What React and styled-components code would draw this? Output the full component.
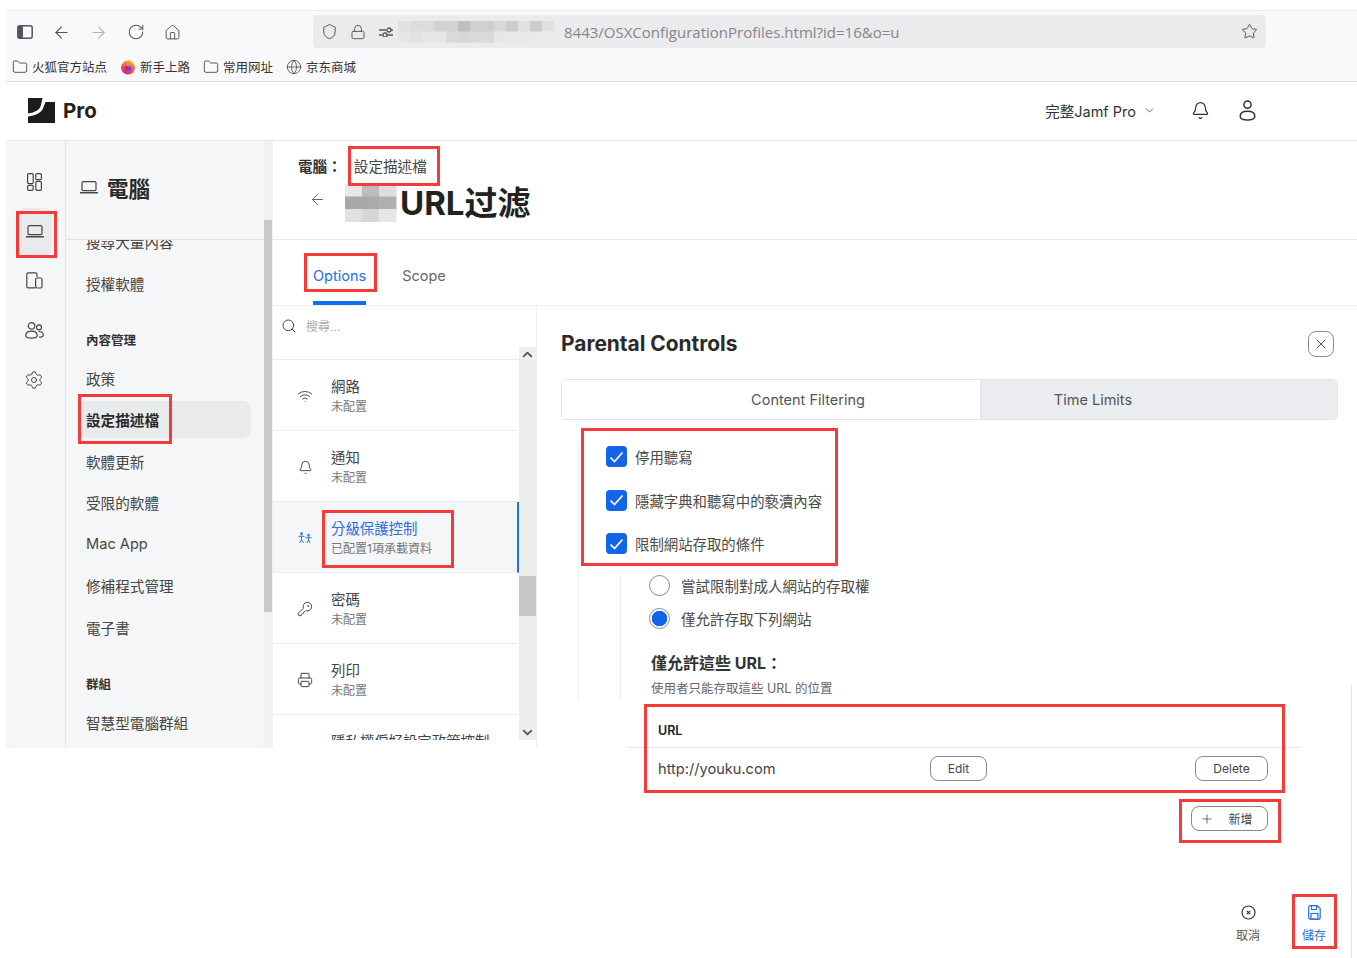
import React from "react"
import styled, { createGlobalStyle } from "styled-components"
import {
  ArrowLeft, ArrowRight, RotateCw, House, Shield, Lock, Star, Folder, Globe, ChevronDown,
  Bell, Settings, Search, Wifi, KeyRound, Printer, X, Plus, ChevronUp,
} from "lucide-react"

const GlobalStyle = createGlobalStyle`
  * { box-sizing: border-box; }
  body {
    margin: 0;
    background: #fff;
    font-family: Inter, "Noto Sans CJK TC", sans-serif;
    color: #444;
  }
`

const Page = styled.div`
  position: relative;
  width: 1357px;
  height: 958px;
  overflow: hidden;
  padding: 10px 0 0 6px;
  background: #fff;
`

/* firefox chrome */
const Chrome = styled.div`
  background: #f9f9fb;
  border-top: 1px solid #ececee;
  border-bottom: 1px solid #dcdcde;
  height: 72px;
`
const Toolbar = styled.div`
  display: flex;
  align-items: center;
  height: 42px;
  padding-left: 0;
  color: #55555a;
`
const ToolIcons = styled.div`
  display: flex;
  align-items: center;
  width: 307px;
`
const ToolSlot = styled.span`
  display: flex;
  align-items: center;
  justify-content: center;
  width: 37px;
`
const UrlBar = styled.div`
  display: flex;
  align-items: center;
  width: 953px;
  height: 33px;
  margin-top: -1px;
  padding: 0 8px;
  border-radius: 4px;
  background: #ebebed;
  gap: 4px;
`
const UrlIcons = styled.div`
  display: flex;
  align-items: center;
  gap: 12px;
`
const UrlText = styled.span`
  flex: 1;
  margin-left: 6px;
  font-family: "Open Sans", "Noto Sans", sans-serif;
  font-size: 15px;
  color: #85858a;
`
const Bookmarks = styled.div`
  display: flex;
  align-items: center;
  height: 27px;
  padding-left: 6px;
  gap: 13px;
`
const Bookmark = styled.span`
  display: flex;
  align-items: center;
  gap: 4px;
  font-family: "Noto Sans CJK SC", sans-serif;
  font-size: 12.5px;
  color: #333;
`

/* jamf header */
const AppHeader = styled.header`
  display: flex;
  align-items: center;
  height: 59px;
  padding: 0 101px 1px 22px;
  border-bottom: 1px solid #e6e7e9;
`
const Brand = styled.div`
  display: flex;
  align-items: center;
  gap: 8px;
  font-size: 20.5px;
  font-weight: 700;
  color: #222;
  flex: 1;
`
const Env = styled.div`
  display: flex;
  align-items: center;
  font-size: 14.5px;
  color: #333;
  gap: 7px;
  margin-right: 35px;
`
const HeaderIcons = styled.div`
  display: flex;
  align-items: center;
  gap: 29px;
  color: #333;
`

const Body = styled.div`
  display: flex;
  align-items: flex-start;
`

/* left side */
const Sidebar = styled.aside`
  display: flex;
  flex: none;
  height: 607px;
  width: 267px;
  background: #f5f6f8;
`
const Rail = styled.nav`
  flex: none;
  width: 60px;
  padding-top: 16px;
  border-right: 1px solid #e2e3e5;
`
const RailItem = styled.div`
  display: flex;
  align-items: center;
  justify-content: center;
  height: ${p => (p.$active ? "48px" : "49.5px")};
  margin: ${p => (p.$active ? "1px 13px 0.5px 11px" : "0 3px 0 0")};
  border-radius: 8px;
  background: ${p => (p.$active ? "#e9eaec" : "transparent")};
  color: #444;
`
const NavCol = styled.div`
  flex: none;
  width: 198px;
  display: flex;
  flex-direction: column;
`
const NavHead = styled.div`
  flex: none;
  display: flex;
  align-items: center;
  gap: 9px;
  height: 99px;
  padding: 0 0 6px 14px;
  border-bottom: 1px solid #dfe0e2;
  font-size: 21.5px;
  font-weight: 700;
  color: #2a2a2a;
  position: relative;
  z-index: 1;
  background: #f5f6f8;
`
const NavList = styled.div`
  flex: 1;
  overflow: hidden;
`
const NavInner = styled.div`
  display: flex;
  flex-direction: column;
  margin-top: -19px;
`
const NavLabel = styled.div`
  display: flex;
  align-items: center;
  height: 53.5px;
  padding: 17px 0 0 20px;
  font-size: 12.5px;
  font-weight: 700;
  color: #333;
`
const NavItem = styled.div`
  display: flex;
  align-items: center;
  flex: none;
  width: 173px;
  height: 37px;
  margin: 2.25px 0 2.25px 12px;
  padding-left: 8px;
  border-radius: 8px;
  font-size: 14.6px;
  font-weight: ${p => (p.$active ? 700 : 400)};
  color: ${p => (p.$active ? "#2a2a2a" : "#454545")};
  background: ${p => (p.$active ? "#e9eaec" : "transparent")};
`
const NavScroll = styled.div`
  flex: none;
  width: 9px;
  height: 607px;
  background: #f1f1f1;
  padding: 79px 1px 136px 0;
  &::after {
    content: "";
    display: block;
    height: 100%;
    background: #c9c9c9;
  }
`

/* main */
const Main = styled.main`
  flex: 1;
  min-width: 0;
`
const PageHead = styled.div`
  height: 99px;
  padding: 13px 0 0 25px;
  border-bottom: 1px solid #e6e7e9;
`
const Crumb = styled.div`
  display: flex;
  align-items: center;
  height: 23px;
  white-space: nowrap;
  font-size: 14.6px;
  color: #444;
  b {
    color: #333;
    margin-right: 12px;
    font-weight: 700;
  }
`
const TitleRow = styled.div`
  display: flex;
  align-items: center;
  height: 44px;
  margin-top: 4px;
  padding-left: 11px;
  color: #555;
`
const BackArrow = styled.span`
  display: flex;
  margin-bottom: 8px;
`
const Spacer = styled.span`
  flex: none;
  width: 19px;
`
const Title = styled.h1`
  margin: 0 0 0 4px;
  font-size: 33px;
  line-height: 44px;
  font-weight: 700;
  color: #222;
`
const Tabs = styled.div`
  display: flex;
  height: 66px;
  padding-left: 40px;
  gap: 36px;
  border-bottom: 1px solid #ececee;
`
const Tab = styled.div`
  display: flex;
  align-items: center;
  height: 65px;
  padding-top: 9px;
  font-size: 14.5px;
  color: ${p => (p.$active ? "#1a6fe8" : "#666")};
  border-bottom: 4px solid ${p => (p.$active ? "#0f6fec" : "transparent")};
`
const Split = styled.div`
  display: flex;
  align-items: flex-start;
`
const ListCol = styled.div`
  flex: none;
  width: 264px;
  height: 442px;
  border-right: 1px solid #f0f0f0;
`
const SearchRow = styled.div`
  display: flex;
  align-items: center;
  gap: 9px;
  height: 41px;
  padding: 0 0 2px 8px;
  color: #444;
  font-size: 12px;
  span { color: #aaa; }
`
const ListBody = styled.div`
  display: flex;
  height: 393px;
`
const Rows = styled.div`
  flex: none;
  width: 246px;
  overflow: hidden;
`
const RowStub = styled.div`
  height: 13px;
  border-bottom: 1px solid #ececee;
`
const Row = styled.div`
  display: flex;
  align-items: center;
  height: 71px;
  padding: 2px 0 0 24px;
  border-bottom: 1px solid #ececee;
  border-right: 2px solid ${p => (p.$active ? "#1f6fe0" : "transparent")};
  background: ${p => (p.$active ? "#f5f6f8" : "#fff")};
  color: ${p => (p.$active ? "#2a6fe0" : "#444")};
`
const RowIcon = styled.div`
  display: flex;
  justify-content: center;
  flex: none;
  width: 16px;
  margin-right: 18px;
`
const RowTitle = styled.div`
  font-size: 14.4px;
  line-height: 21px;
  color: ${p => (p.$active ? "#2a6fe0" : "#444")};
`
const RowSub = styled.div`
  font-size: 12px;
  line-height: 19px;
  color: #777;
`
const ScrollBar = styled.div`
  flex: none;
  width: 17px;
  height: 393px;
  display: flex;
  flex-direction: column;
  justify-content: space-between;
  align-items: center;
  position: relative;
  background: #eeeeee;
  color: #555;
`
const ScrollThumb = styled.div`
  position: absolute;
  top: 229px;
  left: 0;
  width: 17px;
  height: 40px;
  background: #c8c8c8;
`

/* parental controls panel */
const Panel = styled.section`
  position: relative;
  flex: 1;
  height: 652px;
  padding: 20px 19px 0 24px;
`
const PanelEdge = styled.div`
  position: absolute;
  top: 379px;
  right: 5px;
  bottom: 0;
  width: 1px;
  background: #e2e2e2;
`
const PanelHead = styled.div`
  display: flex;
  align-items: center;
  justify-content: space-between;
  height: 36px;
  margin-bottom: 17px;
  padding-right: 4px;
  h2 {
    margin: 0 0 2px;
    font-size: 20.9px;
    font-weight: 700;
    color: #2a2a2a;
  }
`
const CloseButton = styled.button`
  display: flex;
  align-items: center;
  justify-content: center;
  width: 26px;
  height: 26px;
  padding: 0;
  border: 1px solid #8a8a8a;
  border-radius: 8px;
  background: #fff;
  color: #444;
`
const Segments = styled.div`
  display: grid;
  grid-template-columns: 418px 1fr;
  height: 41px;
  border: 1px solid #e3e4e6;
  border-radius: 5px;
  overflow: hidden;
`
const Segment = styled.div`
  display: flex;
  align-items: center;
  justify-content: center;
  padding: ${p => (p.$on ? "0 132px 0 0" : "0 0 0 74px")};
  font-size: 14.5px;
  color: #555;
  background: ${p => (p.$on ? "#ebecef" : "#fff")};
  border-left: ${p => (p.$on ? "1px solid #e3e4e6" : "none")};
`
const Filter = styled.div`
  height: 258px;
  margin: 22px 0 0 17px;
  padding-left: 27px;
  border-left: 1px solid #eeeeee;
`
const Checks = styled.div`
  display: flex;
  flex-direction: column;
  gap: 14.5px;
`
const CheckRow = styled.label`
  display: flex;
  align-items: center;
  height: 29px;
  gap: 8px;
  font-size: 14.4px;
  color: #4a4a4a;
`
const CheckBox = styled.span`
  display: flex;
  align-items: center;
  justify-content: center;
  width: 21px;
  height: 21px;
  border-radius: 4px;
  background: #1264e8;
  color: #fff;
`
const Nested = styled.div`
  height: 124px;
  margin: 17px 0 0 14px;
  padding-left: 28px;
  border-left: 1px solid #eeeeee;
`
const Radios = styled.div`
  display: flex;
  flex-direction: column;
  gap: 12px;
`
const RadioRow = styled.label`
  display: flex;
  align-items: center;
  height: 21px;
  gap: 11px;
  font-size: 14.5px;
  color: #4a4a4a;
`
const Radio = styled.span`
  flex: none;
  width: 21px;
  height: 21px;
  border-radius: 50%;
  border: 1px solid #888;
  background: ${p => (p.$on ? "radial-gradient(circle, #1264e8 0 7.5px, #fff 8px)" : "#fff")};
`
const UrlHeading = styled.div`
  display: flex;
  align-items: center;
  height: 20px;
  margin: 23px 0 0 2px;
  font-size: 16px;
  font-weight: 700;
  color: #333;
`
const UrlHint = styled.div`
  height: 16px;
  margin: 9px 0 0 2px;
  font-size: 12.5px;
  line-height: 16px;
  color: #666;
`
const Table = styled.div`
  width: 674px;
  margin-left: 66px;
`
const TableHead = styled.div`
  display: flex;
  align-items: center;
  height: 48px;
  padding: 13px 0 0 31px;
  border-bottom: 1px solid #e8e8e8;
  font-size: 12.5px;
  font-weight: 600;
  color: #222;
`
const TableRow = styled.div`
  display: grid;
  grid-template-columns: 272px 57px 1fr 73px;
  align-items: center;
  height: 41px;
  padding: 0 33px 0 31px;
  font-size: 14.6px;
  color: #444;
`
const PillButton = styled.button`
  display: flex;
  align-items: center;
  justify-content: center;
  grid-column: ${p => p.$col || "auto"};
  width: ${p => p.$w || "auto"};
  height: 25px;
  padding: 0 ${p => p.$pr || "0"} 0 0;
  border: 1px solid #888;
  border-radius: 8px;
  background: #fff;
  font-family: inherit;
  font-size: 12px;
  color: #444;
  gap: ${p => p.$gap || "15px"};
`
const AddRow = styled.div`
  display: flex;
  justify-content: flex-end;
  margin-top: 17px;
  padding-right: 33px;
`
const Footer = styled.div`
  display: flex;
  justify-content: flex-end;
  margin: 74px -9px 0 0;
`
const FootAction = styled.div`
  display: flex;
  flex-direction: column;
  align-items: center;
  width: 66px;
  gap: 6px;
  font-size: 12px;
  color: ${p => (p.$blue ? "#2a6fe0" : "#555")};
  svg { color: ${p => (p.$blue ? "#2a6fe0" : "#333")}; }
`

/* red annotation boxes laid over the screenshot */
const Mark = styled.div`
  position: absolute;
  left: ${p => p.$x}px;
  top: ${p => p.$y}px;
  width: ${p => p.$w}px;
  height: ${p => p.$h}px;
  border: 3px solid #f53a3a;
  pointer-events: none;
`

const Mosaic = ({ cols, rows, cellW, cellH, colors, id }) => (
  <svg width={cols * cellW} height={rows * cellH} style={{ flex: "none", overflow: "visible" }}>
    <defs>
      <filter id={id} x="-10%" y="-10%" width="120%" height="120%">
        <feGaussianBlur stdDeviation="0.7" />
      </filter>
    </defs>
    <g filter={`url(#${id})`}>
      {colors.map((c, i) => (
        <rect key={i} x={(i % cols) * cellW} y={Math.floor(i / cols) * cellH} width={cellW + 0.5} height={cellH + 0.5} fill={c} />
      ))}
    </g>
  </svg>
)

const SidebarToggle = () => (
  <svg width="16" height="14" viewBox="0 0 16 14" fill="none">
    <rect x="0.8" y="0.8" width="14.4" height="12.4" rx="2" stroke="#55555a" strokeWidth="1.5" />
    <rect x="1" y="1" width="5" height="12" fill="#55555a" />
  </svg>
)

const TrackingPrefs = () => (
  <svg width="16" height="10" viewBox="0 0 16 10" fill="none" stroke="#55555a" strokeWidth="1.3">
    <path d="M1 3h7M1 8h3" />
    <circle cx="11" cy="3" r="2" />
    <circle cx="7" cy="8" r="2" />
    <path d="M13 3h2M9 8h6" />
  </svg>
)

const FirefoxMark = () => (
  <svg width="16" height="16" viewBox="0 0 16 16">
    <defs>
      <linearGradient id="fx" x1="0.7" y1="0" x2="0.3" y2="1">
        <stop offset="0" stopColor="#ffb129" />
        <stop offset="0.55" stopColor="#ff4f3a" />
        <stop offset="1" stopColor="#e31587" />
      </linearGradient>
    </defs>
    <circle cx="8" cy="8.6" r="7" fill="url(#fx)" />
    <path d="M9.5 0.6c1 1.8 3 2.4 4 4.4L9 5z" fill="#ffb129" />
    <circle cx="8" cy="9" r="3.3" fill="#7b3fd6" />
    <path d="M5 6.2c2-1.4 5-0.6 5.8 1.6C9.4 7 7 7 5 6.2z" fill="#ff9a1f" />
  </svg>
)

const JamfLogo = () => (
  <svg width="27" height="25" viewBox="0 0 27 25" fill="#1c1c1c">
    <path d="M0 0h14.500l-1.800 8C11.800 11.500 7 14.500 0 15.500z" />
    <path d="M17.500 4H27v21H0v-6.500c7.500-1 13-3.500 15-8z" />
  </svg>
)

const UserIcon = () => (
  <svg width="17" height="21" viewBox="0 0 17 21" fill="none" stroke="#333" strokeWidth="1.5">
    <circle cx="8.5" cy="4.6" r="3.6" />
    <path d="M1.2 16.500c0-3.400 3-5.200 7.300-5.200s7.300 1.800 7.300 5.200c0 2.400-2.200 3.400-7.300 3.400s-7.300-1-7.300-3.400z" />
  </svg>
)

const DashboardIcon = () => (
  <svg width="15" height="18" viewBox="0 0 15 18" fill="none" stroke="#444" strokeWidth="1.200">
    <rect x="0.600" y="0.600" width="5.600" height="10" rx="1.200" />
    <rect x="0.600" y="12.400" width="5.600" height="5" rx="1.200" />
    <rect x="8.800" y="0.600" width="5.600" height="6" rx="1.200" />
    <rect x="8.800" y="8.400" width="5.600" height="9" rx="1.200" />
  </svg>
)

const LaptopIcon = () => (
  <svg width="18" height="13" viewBox="0 0 18 13" fill="none" stroke="#444" strokeWidth="1.200">
    <rect x="2" y="0.700" width="14" height="9" rx="1.400" />
    <path d="M0.500 11.800h17" strokeWidth="1.500" strokeLinecap="round" />
  </svg>
)

const DevicesIcon = () => (
  <svg width="17" height="17" viewBox="0 0 17 17" fill="none" stroke="#444" strokeWidth="1.200">
    <path d="M9.500 15.800H2.400A1.600 1.600 0 0 1 .8 14.200V2.400A1.600 1.600 0 0 1 2.400.8h7A1.600 1.600 0 0 1 11 2.400V5" />
    <rect x="9.600" y="6" width="6.400" height="10" rx="1.400" />
  </svg>
)

const PeopleIcon = () => (
  <svg width="19" height="17" viewBox="0 0 19 17" fill="none" stroke="#444" strokeWidth="1.200">
    <circle cx="6.500" cy="3.900" r="3.200" />
    <path d="M.8 13.500c0-2.800 2.400-4.400 5.700-4.400s5.700 1.600 5.700 4.400c0 1.800-1.600 2.600-5.700 2.600S.8 15.300.8 13.500z" />
    <circle cx="14" cy="5.300" r="2.500" />
    <path d="M13.500 9.500c2.800 0 4.800 1.300 4.800 3.400 0 1.500-1.300 2.200-4.200 2.200" />
  </svg>
)

const FamilyIcon = () => (
  <svg width="14" height="12" viewBox="0 0 14 12" fill="#2a6fe0" stroke="#2a6fe0">
    <circle cx="3.500" cy="1.600" r="1.300" stroke="none" />
    <circle cx="10.500" cy="3" r="1.200" stroke="none" />
    <path d="M.5 4.500L3.500 4l3 .5M3.500 4v3.500L1.500 11M3.500 7.500l2 3.500M7.500 5.800l3-.8 3 .8M10.500 5v3l-1.500 3M10.500 8l1.500 3" fill="none" strokeWidth="1" />
  </svg>
)

const Check = () => (
  <svg width="15" height="12" viewBox="0 0 15 12" fill="none" stroke="#fff" strokeWidth="1.700">
    <path d="M1.500 6.500l4 4 8-9" />
  </svg>
)

const SaveIcon = () => (
  <svg width="13" height="15" viewBox="0 0 13 15" fill="none" stroke="currentColor" strokeWidth="1.200">
    <path d="M1.800.7h7.400l3 2.800v9.200a1.500 1.500 0 0 1-1.500 1.500H1.800A1.500 1.500 0 0 1 .7 12.700V2.200A1.500 1.500 0 0 1 1.800.7z" />
    <rect x="3" y="8.500" width="7" height="5.700" />
    <path d="M3.500 1v3.500h5V1" />
  </svg>
)

const urlBlur = [
  "#e2e2e4", "#dcdcde", "#dbdbdd", "#d2d2d4", "#d3d3d5", "#bfbfc1", "#cecfd1", "#cecfd1", "#d8d8da", "#cccdcf", "#e2e2e4", "#cdcdcf", "#e0e0e2",
  "#e6e6e8", "#e2e2e4", "#e6e6e8", "#e6e6e8", "#d9d9db", "#d6d6d8", "#d9d9db", "#d9d9db", "#e6e6e8", "#e8e8ea", "#e8e8ea", "#e9e9eb", "#ebebed",
]

const titleBlur = [
  "#e8e8e8", "#bcbcbc", "#dedede",
  "#a8a8a8", "#aaaaaa", "#b0b0b0",
  "#e0e0e0", "#d6d6d6", "#e6e6e6",
]

const configRows = [
  { title: "網路", sub: "未配置", icon: <Wifi size={16} strokeWidth={1.400} /> },
  { title: "通知", sub: "未配置", icon: <Bell size={15} strokeWidth={1.500} /> },
  { title: "分級保護控制", sub: "已配置1項承載資料", icon: <FamilyIcon />, active: true },
  { title: "密碼", sub: "未配置", icon: <KeyRound size={16} strokeWidth={1.400} /> },
  { title: "列印", sub: "未配置", icon: <Printer size={16} strokeWidth={1.500} /> },
  { title: "隱私權偏好設定政策控制", sub: "\u00a0", icon: null },
]

const App = () => (
  <Page>
    <GlobalStyle />
    <Chrome>
      <Toolbar>
        <ToolIcons>
          <ToolSlot><SidebarToggle /></ToolSlot>
          <ToolSlot><ArrowLeft size={19} strokeWidth={1.400} /></ToolSlot>
          <ToolSlot><ArrowRight size={19} strokeWidth={1.400} color="#b5b5b8" /></ToolSlot>
          <ToolSlot><RotateCw size={18} strokeWidth={1.400} /></ToolSlot>
          <ToolSlot><House size={17} strokeWidth={1.400} /></ToolSlot>
        </ToolIcons>
        <UrlBar>
          <UrlIcons>
            <Shield size={17} strokeWidth={1.400} />
            <Lock size={16} strokeWidth={1.400} />
            <TrackingPrefs />
          </UrlIcons>
          <Mosaic id="urlm" cols={13} rows={2} cellW={12} cellH={10.500} colors={urlBlur} />
          <UrlText>8443/OSXConfigurationProfiles.html?id=16&amp;o=u</UrlText>
          <Star size={17} strokeWidth={1.400} />
        </UrlBar>
      </Toolbar>
      <Bookmarks>
        <Bookmark><Folder size={16} strokeWidth={1.200} />火狐官方站点</Bookmark>
        <Bookmark><FirefoxMark />新手上路</Bookmark>
        <Bookmark><Folder size={16} strokeWidth={1.200} />常用网址</Bookmark>
        <Bookmark><Globe size={16} strokeWidth={1.100} />京东商城</Bookmark>
      </Bookmarks>
    </Chrome>
    <AppHeader>
      <Brand><JamfLogo />Pro</Brand>
      <Env>完整Jamf Pro<ChevronDown size={13} strokeWidth={1.400} /></Env>
      <HeaderIcons>
        <Bell size={19} strokeWidth={1.500} />
        <UserIcon />
      </HeaderIcons>
    </AppHeader>
    <Body>
      <Sidebar>
        <Rail>
          <RailItem><DashboardIcon /></RailItem>
          <RailItem $active><LaptopIcon /></RailItem>
          <RailItem><DevicesIcon /></RailItem>
          <RailItem><PeopleIcon /></RailItem>
          <RailItem><Settings size={20} strokeWidth={1.200} /></RailItem>
        </Rail>
        <NavCol>
          <NavHead><LaptopIcon />電腦</NavHead>
          <NavList>
            <NavInner>
              <NavItem>搜尋大量內容</NavItem>
              <NavItem>授權軟體</NavItem>
              <NavLabel>內容管理</NavLabel>
              <NavItem>政策</NavItem>
              <NavItem $active>設定描述檔</NavItem>
              <NavItem>軟體更新</NavItem>
              <NavItem>受限的軟體</NavItem>
              <NavItem>Mac App</NavItem>
              <NavItem>修補程式管理</NavItem>
              <NavItem>電子書</NavItem>
              <NavLabel>群組</NavLabel>
              <NavItem>智慧型電腦群組</NavItem>
            </NavInner>
          </NavList>
        </NavCol>
        <NavScroll />
      </Sidebar>
      <Main>
        <PageHead>
          <Crumb><b>電腦：</b>設定描述檔</Crumb>
          <TitleRow>
            <BackArrow><ArrowLeft size={17} strokeWidth={1.300} /></BackArrow>
            <Spacer />
            <Mosaic id="titlem" cols={3} rows={3} cellW={17} cellH={12.500} colors={titleBlur} />
            <Title>URL过滤</Title>
          </TitleRow>
        </PageHead>
        <Tabs>
          <Tab $active>Options</Tab>
          <Tab>Scope</Tab>
        </Tabs>
        <Split>
          <ListCol>
            <SearchRow>
              <Search size={16} strokeWidth={1.500} />
              <span>搜尋...</span>
            </SearchRow>
            <ListBody>
              <Rows>
                <RowStub />
                {configRows.map(r => (
                  <Row key={r.title} $active={r.active}>
                    <RowIcon>{r.icon}</RowIcon>
                    <div>
                      <RowTitle $active={r.active}>{r.title}</RowTitle>
                      <RowSub>{r.sub}</RowSub>
                    </div>
                  </Row>
                ))}
              </Rows>
              <ScrollBar>
                <ChevronUp size={15} strokeWidth={3} />
                <ScrollThumb />
                <ChevronDown size={15} strokeWidth={3} />
              </ScrollBar>
            </ListBody>
          </ListCol>
          <Panel>
            <PanelEdge />
            <PanelHead>
              <h2>Parental Controls</h2>
              <CloseButton><X size={16} strokeWidth={1.400} /></CloseButton>
            </PanelHead>
            <Segments>
              <Segment>Content Filtering</Segment>
              <Segment $on>Time Limits</Segment>
            </Segments>
            <Filter>
              <Checks>
                <CheckRow><CheckBox><Check /></CheckBox>停用聽寫</CheckRow>
                <CheckRow><CheckBox><Check /></CheckBox>隱藏字典和聽寫中的褻瀆內容</CheckRow>
                <CheckRow><CheckBox><Check /></CheckBox>限制網站存取的條件</CheckRow>
              </Checks>
              <Nested>
                <Radios>
                  <RadioRow><Radio />嘗試限制對成人網站的存取權</RadioRow>
                  <RadioRow><Radio $on />僅允許存取下列網站</RadioRow>
                </Radios>
                <UrlHeading>僅允許這些 URL：</UrlHeading>
                <UrlHint>使用者只能存取這些 URL 的位置</UrlHint>
              </Nested>
            </Filter>
            <Table>
              <TableHead>URL</TableHead>
              <TableRow>
                http://youku.com
                <PillButton $w="57px">Edit</PillButton>
                <PillButton $w="73px" $col="4">Delete</PillButton>
              </TableRow>
              <AddRow>
                <PillButton $w="77px" $gap="14px" $pr="6px"><Plus size={14} strokeWidth={1.300} />新增</PillButton>
              </AddRow>
            </Table>
            <Footer>
              <FootAction>
                <svg width="15" height="15" viewBox="0 0 15 15" fill="none" stroke="currentColor" strokeWidth="1.200">
                  <circle cx="7.500" cy="7.500" r="6.500" />
                  <path d="M5.800 5.800l3.400 3.400M9.200 5.800l-3.400 3.400" />
                </svg>
                取消
              </FootAction>
              <FootAction $blue>
                <SaveIcon />
                儲存
              </FootAction>
            </Footer>
          </Panel>
        </Split>
      </Main>
    </Body>
    <Mark $x={16} $y={211} $w={41} $h={47} />
    <Mark $x={78} $y={394} $w={94} $h={50} />
    <Mark $x={348} $y={146} $w={92} $h={40} />
    <Mark $x={304} $y={253} $w={73} $h={39} />
    <Mark $x={322} $y={510} $w={132} $h={58} />
    <Mark $x={581} $y={428} $w={257} $h={138} />
    <Mark $x={644} $y={704} $w={641} $h={89} />
    <Mark $x={1179} $y={799} $w={102} $h={44} />
    <Mark $x={1292} $y={894} $w={45} $h={55} />
  </Page>
)

export default App
